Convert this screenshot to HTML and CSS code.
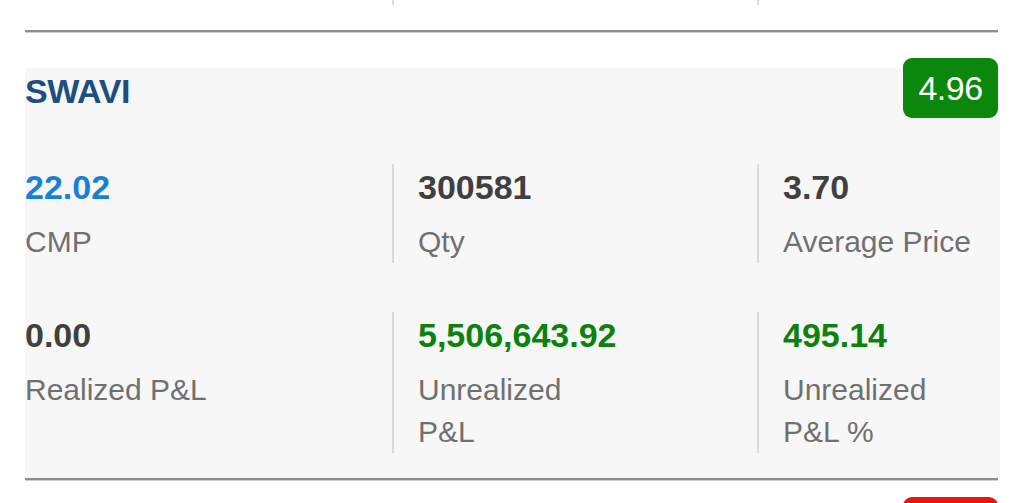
FILE: index.html
```html
<!DOCTYPE html>
<html>
<head>
<meta charset="utf-8">
<link rel="stylesheet" href="styles.css">
</head>
<body>
<div class="list">
  <div class="grid tail">
    <div class="cell"></div>
    <div class="cell"></div>
    <div class="cell"></div>
  </div>
  <div class="sep"></div>

  <div class="card">
    <div class="head">
      <div class="sym">SWAVI</div>
      <div class="badge up">4.96</div>
    </div>
    <div class="grid row first">
      <div class="cell">
        <div class="val blue">22.02</div>
        <div class="lbl">CMP</div>
      </div>
      <div class="cell">
        <div class="val">300581</div>
        <div class="lbl">Qty</div>
      </div>
      <div class="cell">
        <div class="val">3.70</div>
        <div class="lbl">Average Price</div>
      </div>
    </div>
    <div class="grid row">
      <div class="cell">
        <div class="val">0.00</div>
        <div class="lbl">Realized P&amp;L</div>
      </div>
      <div class="cell">
        <div class="val green">5,506,643.92</div>
        <div class="lbl">Unrealized<br>P&amp;L</div>
      </div>
      <div class="cell">
        <div class="val green">495.14</div>
        <div class="lbl">Unrealized<br>P&amp;L %</div>
      </div>
    </div>
  </div>
  <div class="sep"></div>

  <div class="card next">
    <div class="head">
      <div class="sym"></div>
      <div class="badge down"></div>
    </div>
  </div>
</div>
</body>
</html>
```

FILE: styles.css
```css
html, body {
  margin: 0;
  padding: 0;
  background: #ffffff;
  overflow: hidden;
}

body {
  font-family: "Liberation Sans", Arial, Helvetica, sans-serif;
  width: 1024px;
  height: 503px;
}

.list {
  margin-left: 25px;
  width: 975px;
}

.grid {
  display: grid;
  grid-template-columns: 367px 365px 1fr;
}

.cell + .cell {
  border-left: 2px solid #dadada;
  padding-left: 24px;
}

.tail {
  height: 5px;
  width: 973px;
}

.sep {
  width: 973px;
  height: 2px;
  background: #8d8d8d;
  border-bottom: 1px solid #d2d2d2;
}

.tail + .sep {
  margin-top: 25px;
}

.card {
  background: #f7f7f7;
  margin-top: 35px;
  padding-bottom: 25px;
}

.card.next {
  margin-top: 26px;
}

.head {
  display: flex;
  justify-content: space-between;
  align-items: flex-start;
  height: 50px;
  padding-right: 2px;
}

.sym {
  font-size: 34px;
  font-weight: 700;
  letter-spacing: -0.4px;
  line-height: 32px;
  padding-top: 7px;
  color: #1d4e80;
}

.badge {
  margin-top: -10px;
  width: 95px;
  height: 60px;
  border-radius: 9px;
  color: #ffffff;
  font-size: 34px;
  line-height: 60px;
  text-align: center;
  letter-spacing: -0.5px;
}

.badge.up {
  background: #0b870b;
}

.badge.down {
  background: #e8140f;
}

.row.first {
  margin-top: 46px;
}

.row + .row {
  margin-top: 49px;
}

.val {
  font-size: 34px;
  font-weight: 700;
  line-height: 36px;
  padding-top: 5px;
  color: #404040;
}

.val.blue {
  color: #1b7fd6;
}

.val.green {
  color: #0c820c;
}

.lbl {
  margin-top: 16px;
  font-size: 30px;
  line-height: 42px;
  color: #707070;
}
```
